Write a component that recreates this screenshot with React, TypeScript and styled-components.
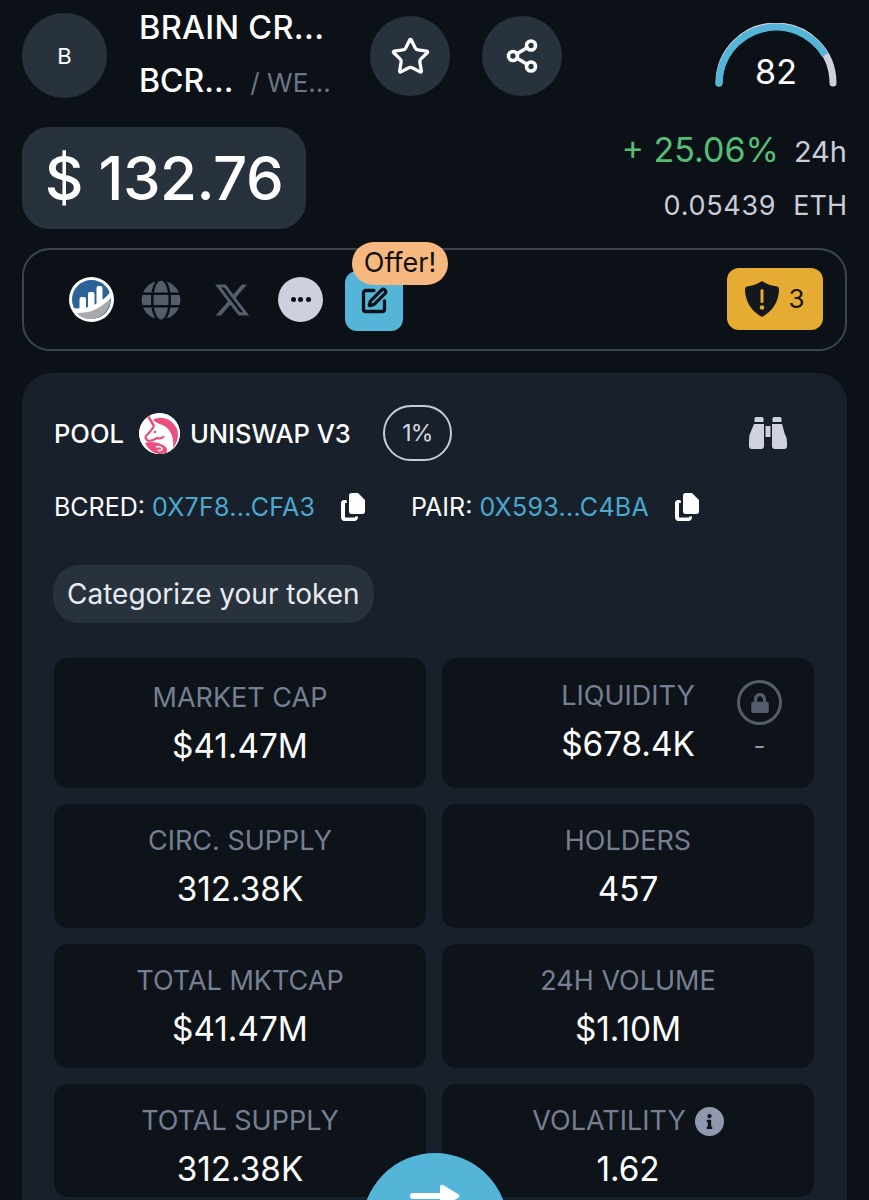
import React from "react";
import styled, { createGlobalStyle } from "styled-components";
import { FaGlobe, FaInfo, FaLock } from "react-icons/fa";
import { FaXTwitter } from "react-icons/fa6";
import { LuStar, LuShare2, LuSquarePen } from "react-icons/lu";

const GlobalStyle = createGlobalStyle`
  html, body {
    margin: 0;
    background: #0c1117;
    font-family: "Inter", "Liberation Sans", sans-serif;
    color: #fff;
    overflow: hidden;
  }
`;

const Page = styled.div`
  position: relative;
  width: 869px;
  height: 1200px;
  overflow: hidden;
  box-sizing: border-box;
  padding: 13px 22px 0;
  background: #0c1117;
`;

const Header = styled.div`
  display: flex;
  align-items: flex-start;
  height: 85px;
`;

const Avatar = styled.div`
  width: 85px;
  height: 85px;
  flex: none;
  border-radius: 50%;
  background: #28323d;
  display: flex;
  align-items: center;
  justify-content: center;
  font-size: 22px;
`;

const Names = styled.div`
  width: 231px;
  margin-left: 32px;
  flex: none;
`;

const Name = styled.div`
  font-size: 32.5px;
  font-weight: 500;
  line-height: 30px;
  letter-spacing: 0.3px;
`;

const SubRow = styled.div`
  display: flex;
  align-items: baseline;
  margin-top: 23px;
  font-size: 32px;
  font-weight: 500;
  line-height: 30px;
`;

const Chain = styled.span`
  margin-left: 17px;
  font-size: 26px;
  font-weight: 400;
  color: #6d7688;
`;

const RoundButton = styled.div`
  width: 80px;
  height: 80px;
  flex: none;
  margin-top: 3px;
  margin-right: 32px;
  border-radius: 50%;
  background: #28323d;
  display: flex;
  align-items: center;
  justify-content: center;
  color: #fff;
`;

const GaugeBox = styled.div`
  position: relative;
  margin-left: 121px;
  margin-top: 10px;
  width: 122px;
  height: 64px;
  flex: none;
`;

const GaugeValue = styled.div`
  position: absolute;
  left: 0;
  right: 0;
  top: 29px;
  text-align: center;
  font-size: 34px;
  line-height: 40px;
`;

const PriceRow = styled.div`
  display: flex;
  justify-content: space-between;
  margin-top: 29px;
`;

const PricePill = styled.div`
  width: 284px;
  height: 102px;
  border-radius: 27px;
  background: #28323d;
  display: flex;
  align-items: center;
  justify-content: center;
  font-size: 60px;
  font-weight: 500;
  letter-spacing: -0.5px;
`;

const Changes = styled.div`
  display: flex;
  flex-direction: column;
  align-items: flex-end;
  padding-top: 2px;
`;

const ChangeRow = styled.div`
  display: flex;
  align-items: baseline;
  gap: 15px;
  height: 42px;
  line-height: 42px;
`;

const EthRow = styled(ChangeRow)`
  margin-top: 18px;
  gap: 17px;
  height: 34px;
  line-height: 34px;
`;

const Percent = styled.span`
  font-size: 34px;
  color: #56bd74;
`;

const Period = styled.span<{ $size: number; $track?: number }>`
  font-size: ${(p) => p.$size}px;
  letter-spacing: ${(p) => p.$track ?? 0}px;
  color: #c9ccd8;
`;

const LinksBar = styled.div`
  display: flex;
  align-items: center;
  height: 103px;
  margin-top: 19px;
  box-sizing: border-box;
  padding: 0 22px 0 45px;
  border: 2px solid #3a4552;
  border-radius: 28px;
`;

const LinkSlot = styled.div<{ $width: number }>`
  width: ${(p) => p.$width}px;
  flex: none;
  display: flex;
  align-items: center;
  color: #555c6b;
`;

const MoreDots = styled.div`
  width: 45px;
  height: 45px;
  border-radius: 50%;
  background: #cfd0de;
  display: flex;
  align-items: center;
  justify-content: center;
  gap: 2.5px;
`;

const Dot = styled.i`
  width: 5px;
  height: 5px;
  border-radius: 50%;
  background: #0c1117;
`;

const EditWrap = styled.div`
  position: relative;
  width: 58px;
  height: 60px;
  margin-top: 2px;
  flex: none;
`;

const EditButton = styled.div`
  width: 58px;
  height: 60px;
  border-radius: 12px;
  background: #54b5d9;
  color: #0c1117;
  display: flex;
  align-items: center;
  justify-content: center;
`;

const OfferTag = styled.div`
  position: absolute;
  left: 7px;
  top: -29px;
  width: 96px;
  height: 43px;
  border-radius: 22px;
  background: #f6b87f;
  color: #111;
  font-size: 27px;
  line-height: 41px;
  text-align: center;
`;

const AuditBadge = styled.div`
  margin-left: auto;
  margin-bottom: 2px;
  width: 96px;
  height: 62px;
  border-radius: 12px;
  background: #e5ab32;
  color: #14181d;
  display: flex;
  align-items: center;
  justify-content: center;
  gap: 9px;
  font-size: 26px;
`;

const Card = styled.div`
  margin-top: 22px;
  height: 860px;
  box-sizing: border-box;
  padding: 32px 32px 0;
  background: #18212b;
  border-radius: 30px;
`;

const PoolRow = styled.div`
  display: flex;
  align-items: center;
  height: 56px;
  font-size: 25.5px;
  font-weight: 500;
`;

const PoolLogo = styled.div`
  width: 41px;
  height: 41px;
  margin: 0 10px 0 15px;
  flex: none;
  border-radius: 50%;
  background: #fff;
  overflow: hidden;
`;

const FeePill = styled.div`
  width: 69px;
  height: 56px;
  margin-left: 32px;
  box-sizing: border-box;
  border: 2px solid #c9ccd8;
  border-radius: 28px;
  display: flex;
  align-items: center;
  justify-content: center;
  font-size: 23px;
  font-weight: 400;
  letter-spacing: -1px;
  color: #d5d7e0;
`;

const Scout = styled.svg`
  margin-left: auto;
  margin-right: 28px;
  flex: none;
`;

const AddressRow = styled.div`
  display: flex;
  align-items: center;
  margin-top: 29px;
  height: 34px;
  font-size: 25px;
`;

const Address = styled.div<{ $width: number }>`
  width: ${(p) => p.$width}px;
  flex: none;
  display: flex;
  align-items: center;
`;

const AddressValue = styled.span`
  margin-left: 7px;
  color: #4aa9cf;
  letter-spacing: 0.3px;
`;

const CopyIcon = styled.svg`
  margin-left: 26px;
  flex: none;
`;

const CategoryTag = styled.div`
  display: flex;
  align-items: center;
  width: fit-content;
  height: 58px;
  margin-top: 41px;
  margin-left: -1px;
  padding: 0 14px;
  border-radius: 26px;
  background: #28323d;
  font-size: 28px;
  color: #e8eaf0;
`;

const Stats = styled.div`
  display: grid;
  grid-template-columns: 372px 372px;
  grid-template-rows: 130px 124px 124px 113px;
  gap: 16px;
  margin-top: 35px;
`;

const StatCell = styled.div<{ $top: number }>`
  position: relative;
  box-sizing: border-box;
  padding-top: ${(p) => p.$top}px;
  background: #0e1319;
  border-radius: 14px;
  display: flex;
  flex-direction: column;
  align-items: center;
`;

const StatLabel = styled.div`
  display: flex;
  align-items: center;
  gap: 9px;
  font-size: 27px;
  line-height: 36px;
  color: #767f92;
`;

const StatValue = styled.div`
  margin-top: 7px;
  font-size: 33.3px;
  line-height: 46px;
  color: #fff;
`;

const InfoDot = styled.span`
  width: 29px;
  height: 29px;
  border-radius: 50%;
  background: #8f98ad;
  color: #0e1319;
  display: inline-flex;
  align-items: center;
  justify-content: center;
`;

const LockBlock = styled.div`
  position: absolute;
  right: 32px;
  top: 22px;
  display: flex;
  flex-direction: column;
  align-items: center;
  color: #555c6b;
`;

const LockRing = styled.div`
  width: 45px;
  height: 45px;
  box-sizing: border-box;
  border: 3px solid #555c6b;
  border-radius: 50%;
  display: flex;
  align-items: center;
  justify-content: center;
`;

const LockDash = styled.span`
  margin-top: 6px;
  font-size: 26px;
  line-height: 30px;
  color: #8f98ad;
`;

const NextButton = styled.div`
  position: absolute;
  left: 362px;
  top: 1153px;
  width: 146px;
  height: 146px;
  border-radius: 50%;
  background: #54b5d9;
  display: flex;
  justify-content: center;
  padding-top: 31px;
  box-sizing: border-box;
`;

const stats = [
  { label: "MARKET CAP", value: "$41.47M", top: 22 },
  { label: "LIQUIDITY", value: "$678.4K", top: 20, lock: true },
  { label: "CIRC. SUPPLY", value: "312.38K", top: 19 },
  { label: "HOLDERS", value: "457", top: 19 },
  { label: "TOTAL MKTCAP", value: "$41.47M", top: 19 },
  { label: "24H VOLUME", value: "$1.10M", top: 19 },
  { label: "TOTAL SUPPLY", value: "312.38K", top: 19 },
  { label: "VOLATILITY", value: "1.62", top: 19, info: true },
];

const Copy = () => (
  <CopyIcon width="24" height="28" viewBox="0 0 24 28">
    <path d="M8 2.5C8 1.1 9.1 0 10.500 0H17l7 7v11.500c0 1.400-1.100 2.500-2.500 2.500h-11C9.100 21 8 19.900 8 18.500z" fill="#fff" />
    <path d="M5.500 7H3C1.400 7 0 8.400 0 10v14.500C0 26.400 1.600 28 3.500 28h10c1.900 0 3.500-1.600 3.500-3.500V23.500h-3v1h-10V10h2z" fill="#fff" />
  </CopyIcon>
);

const Gauge = () => (
  <svg width="122" height="64" viewBox="0 0 122 64">
    <path d="M4 60 A57 57 0 0 1 118 60" fill="none" stroke="#cfd0de" strokeWidth="7" strokeLinecap="round" />
    <path d="M4 60 A57 57 0 0 1 110 32" fill="none" stroke="#54b5d9" strokeWidth="7" />
    <circle cx="4" cy="60" r="3.500" fill="#54b5d9" />
  </svg>
);

const ChartLogo = () => (
  <svg width="45" height="45" viewBox="0 0 45 45">
    <circle cx="22.500" cy="22.500" r="22.500" fill="#fff" />
    <circle cx="22.500" cy="22.500" r="19.500" fill="#2c6296" />
    <path d="M8 36 C22 36 34 30 42 19 C42 32 33 42 22 42 C16 42 11 40 8 36z" fill="#a8a9ab" />
    <path d="M3 31 C18 33 33 27 43 13 L43 19 C34 31 20 37 8 36z" fill="#fff" />
    <path d="M10.500 32V22q0-2 2-2h2.500q2 0 2 2v10zM19 32V17q0-2 2-2h2.500q2 0 2 2v14zM27.500 28V11q0-2 2-2h2q2 0 2 2v13z" fill="#fff" />
  </svg>
);

const UniswapLogo = () => (
  <svg width="41" height="41" viewBox="0 0 41 41">
    <circle cx="20.500" cy="20.500" r="20.500" fill="#fff" />
    <path d="M14 7C21 2 33 5 38 16c2 6 1 13-4 19 1-9-1-16-7-21-4-3-9-3-13-7z" fill="#ea4f80" />
    <path d="M9 3l6 10" stroke="#ea4f80" strokeWidth="2.500" fill="none" />
    <path d="M15 13c-2 4-5 7-8 10-1 2 0 4 3 5 3 0 5-1 8-3 3 1 5 1 7-2" stroke="#ea4f80" strokeWidth="2.200" fill="none" />
    <path d="M6 30c5-2 13-1 18 2 4 2 5 5 3 8-2 1-5 1-7 1-6-1-11-5-14-11z" fill="#ea4f80" />
    <path d="M17 34c3-1 6 0 6 2s-3 2-4 1" stroke="#fff" strokeWidth="1.500" fill="none" />
    <circle cx="16" cy="19" r="1.300" fill="#ea4f80" />
  </svg>
);

const Shield = () => (
  <svg width="34" height="36" viewBox="0 0 34 36">
    <path d="M17 0c4 3 10 5 15 5.500 1 .1 2 1 2 2.500C34 20 28 30 17 36 6 30 0 20 0 8c0-1.500 1-2.400 2-2.500C7 5 13 3 17 0z" fill="#14181d" />
    <rect x="15.500" y="8" width="3" height="14" rx="1.500" fill="#e5ab32" />
    <circle cx="17" cy="26.500" r="2.200" fill="#e5ab32" />
  </svg>
);

const App = () => (
  <Page>
    <GlobalStyle />
    <Header>
      <Avatar>B</Avatar>
      <Names>
        <Name>BRAIN CR...</Name>
        <SubRow>
          BCR...
          <Chain>/ WE...</Chain>
        </SubRow>
      </Names>
      <RoundButton>
        <LuStar size={41} strokeWidth={1.900} />
      </RoundButton>
      <RoundButton>
        <LuShare2 size={36} strokeWidth={2.400} />
      </RoundButton>
      <GaugeBox>
        <Gauge />
        <GaugeValue>82</GaugeValue>
      </GaugeBox>
    </Header>

    <PriceRow>
      <PricePill>$ 132.76</PricePill>
      <Changes>
        <ChangeRow>
          <Percent>+ 25.06%</Percent>
          <Period $size={29}>24h</Period>
        </ChangeRow>
        <EthRow>
          <Period $size={27} $track={0.7}>
            0.05439
          </Period>
          <Period $size={27}>ETH</Period>
        </EthRow>
      </Changes>
    </PriceRow>

    <LinksBar>
      <LinkSlot $width={72}>
        <ChartLogo />
      </LinkSlot>
      <LinkSlot $width={72}>
        <FaGlobe size={40} />
      </LinkSlot>
      <LinkSlot $width={65}>
        <FaXTwitter size={38} />
      </LinkSlot>
      <LinkSlot $width={67}>
        <MoreDots>
          <Dot />
          <Dot />
          <Dot />
        </MoreDots>
      </LinkSlot>
      <EditWrap>
        <EditButton>
          <LuSquarePen size={28} strokeWidth={2.800} />
        </EditButton>
        <OfferTag>Offer!</OfferTag>
      </EditWrap>
      <AuditBadge>
        <Shield />3
      </AuditBadge>
    </LinksBar>

    <Card>
      <PoolRow>
        POOL
        <PoolLogo>
          <UniswapLogo />
        </PoolLogo>
        UNISWAP V3
        <FeePill>1%</FeePill>
        <Scout width="38" height="32" viewBox="0 0 38 32">
          <path d="M7 0h6q1.500 0 1.500 1.500V5h-9V1.500Q5.500 0 7 0zM25 0h6q1.500 0 1.500 1.500V5h-9V1.500Q23.500 0 25 0z" fill="#cfd2dd" />
          <path d="M5 7h10v22q0 3-3 3H3q-3 0-3-3v-6q0-6 2.500-10zM23 7h10l2.500 9q2.500 4 2.500 10v3q0 3-3 3h-9q-3 0-3-3z" fill="#cfd2dd" />
          <rect x="16.500" y="9" width="5" height="11" fill="#cfd2dd" />
        </Scout>
      </PoolRow>
      <AddressRow>
        <Address $width={357}>
          BCRED:
          <AddressValue>0X7F8...CFA3</AddressValue>
          <Copy />
        </Address>
        <Address $width={300}>
          PAIR:
          <AddressValue>0X593...C4BA</AddressValue>
          <Copy />
        </Address>
      </AddressRow>
      <CategoryTag>Categorize your token</CategoryTag>
      <Stats>
        {stats.map((s) => (
          <StatCell key={s.label} $top={s.top}>
            <StatLabel>
              {s.label}
              {s.info && (
                <InfoDot>
                  <FaInfo size={15} />
                </InfoDot>
              )}
            </StatLabel>
            <StatValue>{s.value}</StatValue>
            {s.lock && (
              <LockBlock>
                <LockRing>
                  <FaLock size={20} />
                </LockRing>
                <LockDash>-</LockDash>
              </LockBlock>
            )}
          </StatCell>
        ))}
      </Stats>
    </Card>

    <NextButton>
      <svg width="50" height="24" viewBox="0 0 50 24">
        <path d="M3 9h27V3q0-3 3-2l15 9q3 2 0 4L33 23q-3 1-3-2v-6H3a3 3 0 0 1 0-6z" fill="#fff" />
      </svg>
    </NextButton>
  </Page>
);

export default App;
